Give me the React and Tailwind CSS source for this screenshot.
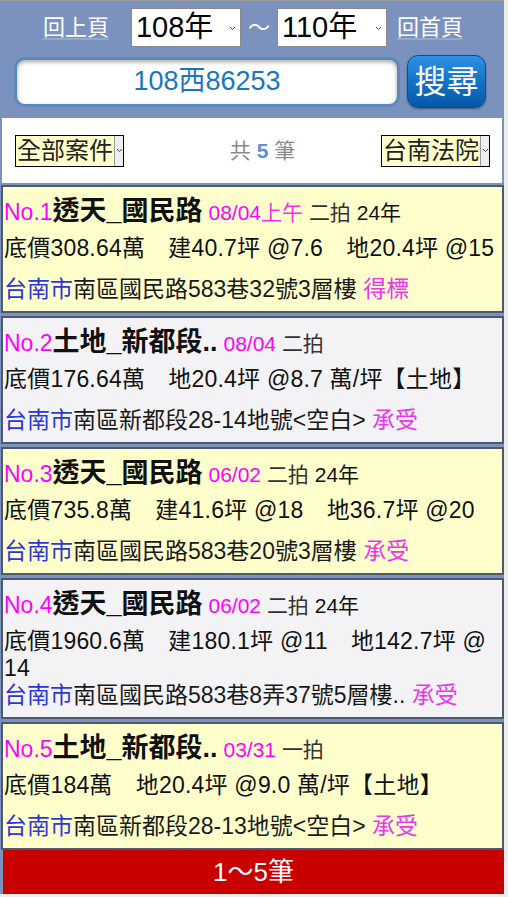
import React from "react";

const FONT = { fontFamily: '"Liberation Sans", "Noto Sans CJK TC", sans-serif' };

function Chevron({ className = "" }) {
  return (
    <svg width="7" height="5" viewBox="0 0 7 5" className={className}>
      <path d="M1 1 L3.5 3.5 L6 1" fill="none" stroke="#444" strokeWidth="1" />
    </svg>
  );
}

function YearSelect({ value }) {
  return (
    <div className="flex h-[39px] w-[110px] items-center justify-between border border-[#8a8a8a] bg-white pl-[4px] pr-[4px]">
      <span className="text-[29px] leading-none text-black">{value}</span>
      <Chevron className="mt-[2px]" />
    </div>
  );
}

function FilterSelect({ value }) {
  return (
    <div className="flex h-[32px] items-stretch border border-black bg-[#ffffcc]">
      <span className="px-[1px] text-[24px] leading-[30px] text-[#222]">{value}</span>
      <span className="flex w-[9px] items-center justify-center border-l border-[#999] bg-[#eeeeee]">
        <Chevron />
      </span>
    </div>
  );
}

const cards = [
  {
    no: "No.1",
    title: "透天_國民路",
    date: "08/04",
    ampm: "上午",
    pai: "二拍",
    age: "24年",
    line2: ["底價308.64萬　建40.7坪 @7.6　地20.4坪 @15"],
    addr: "南區國民路583巷32號3層樓",
    status: "得標",
    bg: "bg-[#ffffcc]",
  },
  {
    no: "No.2",
    title: "土地_新都段..",
    date: "08/04",
    pai: "二拍",
    line2: ["底價176.64萬　地20.4坪 @8.7 萬/坪【土地】"],
    addr: "南區新都段28-14地號<空白>",
    status: "承受",
    bg: "bg-[#f3f3f6]",
  },
  {
    no: "No.3",
    title: "透天_國民路",
    date: "06/02",
    pai: "二拍",
    age: "24年",
    line2: ["底價735.8萬　建41.6坪 @18　地36.7坪 @20"],
    addr: "南區國民路583巷20號3層樓",
    status: "承受",
    bg: "bg-[#ffffcc]",
  },
  {
    no: "No.4",
    title: "透天_國民路",
    date: "06/02",
    pai: "二拍",
    age: "24年",
    line2: ["底價1960.6萬　建180.1坪 @11　地142.7坪 @", "14"],
    addr: "南區國民路583巷8弄37號5層樓..",
    status: "承受",
    bg: "bg-[#f3f3f6]",
  },
  {
    no: "No.5",
    title: "土地_新都段..",
    date: "03/31",
    pai: "一拍",
    line2: ["底價184萬　地20.4坪 @9.0 萬/坪【土地】"],
    addr: "南區新都段28-13地號<空白>",
    status: "承受",
    bg: "bg-[#ffffcc]",
  },
];

function Card({ c }) {
  return (
    <div className={`border-2 border-[#4e5a6c] ${c.bg} pl-[1px] pt-[6px] pb-[9px]`}>
      <div className="flex h-[36px] items-center">
        <div className="whitespace-nowrap">
          <span className="text-[23px] text-[#ff00ff]">{c.no}</span>
          <span className="text-[27px] font-bold text-[#111]">{c.title}</span>
          <span className="text-[21px] text-[#ff00ff]"> {c.date}</span>
          {c.ampm && <span className="text-[21px] text-[#ee33ee]">{c.ampm}</span>}
          <span className="text-[21px] text-[#333]"> {c.pai}</span>
          {c.age && <span className="text-[21px] text-[#111]"> {c.age}</span>}
        </div>
      </div>
      <div className="min-h-[47px] pt-[6px]">
        {c.line2.map((l, i) => (
          <div key={i} className="flex h-[27px] items-center">
            <div className="whitespace-nowrap text-[23px] tracking-[0.2px] text-[#111]">{l}</div>
          </div>
        ))}
      </div>
      <div className="flex h-[26px] items-center">
        <div className="whitespace-nowrap text-[23px]">
          <span className="text-[#2b38d8]">台南市</span>
          <span className="text-[#1a1a1a]">{c.addr}</span>
          <span className="text-[#ee33ee]"> {c.status}</span>
        </div>
      </div>
    </div>
  );
}

export default function App() {
  return (
    <div className="min-h-[897px] bg-[#ececec]" style={FONT}>
      <div className="w-[504px] border-t border-[#9a9a9a] bg-[#7b92be]">
        {/* Header */}
        <div className="flex h-[117px] flex-col">
          <div className="mt-[7px] flex items-center justify-center pl-[2px]">
            <a className="text-[22px] leading-none text-white underline decoration-[#93a8d0] underline-offset-[3px]">
              回上頁
            </a>
            <div className="ml-[22px]">
              <YearSelect value="108年" />
            </div>
            <span className="mx-[7px] text-[22px] leading-none text-white">～</span>
            <YearSelect value="110年" />
            <a className="ml-[10px] text-[22px] leading-none text-white underline decoration-[#93a8d0] underline-offset-[3px]">
              回首頁
            </a>
          </div>
          <div className="mt-[8px] flex items-center justify-center gap-[7px] pr-[4px]">
            <div className="flex h-[50px] w-[386px] items-center justify-center rounded-[11px] border-[3px] border-[#5f88ba] bg-white shadow-[inset_0_2px_4px_rgba(0,0,0,0.35)]">
              <span className="text-[27px] leading-none text-[#1877c0]">108西86253</span>
            </div>
            <button className="flex h-[53px] w-[79px] items-center justify-center rounded-[11px] border border-[#0b4f93] bg-gradient-to-b from-[#2f92e4] via-[#1473c8] to-[#0657a6] shadow-[0_1px_2px_rgba(0,0,0,0.4)]">
              <span className="text-[32px] leading-none text-white">搜尋</span>
            </button>
          </div>
        </div>

        {/* Filter row */}
        <div className="mx-[2px] flex h-[65px] items-center justify-between bg-white pl-[13px] pr-[12px]">
          <FilterSelect value="全部案件" />
          <div className="ml-[20px] text-[21px] leading-none text-[#8a8a8a]">
            共 <span className="font-bold text-[#5b8ee0]">5</span> 筆
          </div>
          <FilterSelect value="台南法院" />
        </div>

        {/* Cards */}
        <div className="flex flex-col gap-[3px] pl-[1px] pt-[2px]">
          {cards.map((c) => (
            <Card key={c.no} c={c} />
          ))}
        </div>

        {/* Footer */}
        <div className="ml-[3px] flex h-[44px] items-center justify-center bg-[#c80000]">
          <span className="text-[26px] leading-none text-white">1～5筆</span>
        </div>
      </div>
    </div>
  );
}
